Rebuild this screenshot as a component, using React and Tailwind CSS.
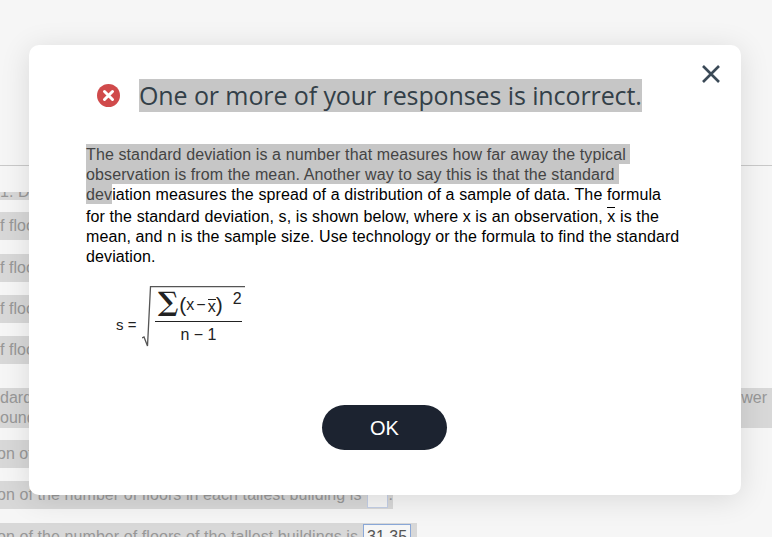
import React from "react";

const sans = "font-['Liberation_Sans',Arial,sans-serif]";

function BackRow({ children, className = "" }) {
  return (
    <div className={`whitespace-nowrap overflow-hidden bg-[#d8d8d8] text-[#979797] text-base tracking-[0.03px] ${className}`}>
      {children}
    </div>
  );
}

function ErrorIcon() {
  return (
    <svg width="23" height="23" viewBox="0 0 23 23" className="shrink-0">
      <circle cx="11.5" cy="11.5" r="11.5" fill="#d04a4b" />
      <path d="M7.5 7.5l8 8M15.5 7.5l-8 8" stroke="#fff" strokeWidth="3" strokeLinecap="round" />
    </svg>
  );
}

function Formula() {
  return (
    <div className={`flex items-center ml-[87px] mt-[19px] text-[#222] ${sans}`}>
      <span className="text-[15px] w-[26px] mt-[16px]">s =</span>
      <div className="relative w-[103px] h-[62px]">
        {/* radical sign */}
        <svg width="103" height="62" viewBox="0 0 103 62" className="absolute left-0 top-0">
          <path d="M0 52l2-1 3.5 9L8.5 0.7H103" fill="none" stroke="#555" strokeWidth="1.3" />
        </svg>
        <div className="absolute left-[13px] top-[3px] w-[87px] h-[33px] border-b border-[#222] flex items-center text-base leading-none pl-[3px]">
          <span className="text-[27px] font-bold font-['DejaVu_Serif',serif] mb-[8px]">∑</span>
          <span className="text-[21px] font-light ml-[1px] mb-[1px]">(</span>
          <span>x</span>
          <span className="mx-[2px]">−</span>
          <span className="border-t border-[#222] mt-[1px] leading-[13px]">x</span>
          <span className="text-[21px] font-light mb-[1px]">)</span>
          <span className="ml-[10px] mb-[12px]">2</span>
        </div>
        <div className="absolute left-[13px] top-[39px] w-[87px] text-center text-base leading-[20px]">n − 1</div>
      </div>
    </div>
  );
}

export default function App() {
  return (
    <div className={`relative w-[772px] h-[537px] overflow-hidden bg-[#f6f6f6] ${sans}`}>
      <div className="h-[166px] border-b border-[#c9c9c9]" />

      <div className="flex flex-col">
        <BackRow className="h-[8px] leading-[0px] mt-[26px] w-[360px]">1. Do</BackRow>
        <BackRow className="h-[28px] leading-[28px] mt-[12px] w-[360px]">f floors</BackRow>
        <BackRow className="h-[28px] leading-[28px] mt-[14px] w-[360px]">f floors</BackRow>
        <BackRow className="h-[28px] leading-[28px] mt-[13px] w-[360px]">f floors</BackRow>
        <BackRow className="h-[28px] leading-[28px] mt-[13px] w-[360px]">f floors</BackRow>
        <BackRow className="h-[40px] leading-[20px] mt-[24px]">
          <div className="flex justify-between pr-[5px]">
            <span>dard</span>
            <span>wer</span>
          </div>
          <div>ound</div>
        </BackRow>
        <BackRow className="h-[28px] leading-[28px] mt-[12px] w-[360px]">
          <span className="block -ml-[3px]">on of</span>
        </BackRow>
        <BackRow className="h-[28px] leading-[28px] mt-[13px] w-[393px] flex items-center">
          <span className="-ml-[3px] tracking-[0.08px]">on of the number of floors in each tallest building is</span>
          <span className="w-[21px] h-[24px] ml-[5px] mr-[1px] self-end mb-[1px] border border-[#c4cfe6] bg-[#f6f6f6]" />
          <span>.</span>
        </BackRow>
        <BackRow className="h-[28px] leading-[28px] mt-[14px] w-[417px] flex items-start">
          <span className="-ml-[3px] tracking-[0.08px]">on of the number of floors of the tallest buildings is</span>
          <span className="ml-[5px] mt-[1px] px-[3px] h-[24px] leading-[24px] border border-[#8aa8d8] bg-[#f6f6f6] text-[#555]">31.35</span>
        </BackRow>
      </div>

      <div className="absolute left-[29px] top-[45px] w-[712px] h-[450px] bg-white rounded-[10px] shadow-[0_4px_30px_rgba(0,0,0,0.12)]">
        <button className="absolute right-[21px] top-[20px] text-[#3b4a57]">
          <svg width="18" height="18" viewBox="0 0 18 18" className="block">
            <path d="M1 1l16 16M17 1L1 17" stroke="currentColor" strokeWidth="2.6" fill="none" />
          </svg>
        </button>

        <div className="flex items-center ml-[68px] pt-[34px]">
          <ErrorIcon />
          <h1 className="ml-[19px] bg-[#c6c6c6] text-[#333f48] text-[25px] leading-[33px] tracking-[-0.1px] font-normal font-['Open_Sans',sans-serif] whitespace-nowrap">
            One or more of your responses is incorrect.
          </h1>
        </div>

        <div className="mt-[32px] ml-[57px] text-base leading-[20px] tracking-[0.11px] text-black whitespace-nowrap">
          <div className="h-[20px]"><span className="inline-block h-[20px] pt-[1px] bg-[#c6c6c6] text-[#444] whitespace-pre">The standard deviation is a number that measures how far away the typical </span></div>
          <div className="h-[20px]"><span className="inline-block h-[20px] pt-[1px] bg-[#c6c6c6] text-[#444] whitespace-pre">observation is from the mean. Another way to say this is that the standard </span></div>
          <div className="h-[20px]"><span className="inline-block h-[20px] pt-[1px] bg-[#c6c6c6] text-[#444]">dev</span>iation measures the spread of a distribution of a sample of data. The formula</div>
          <div className="mt-[3px]">
            for the standard deviation, s, is shown below, where x is an observation,{" "}
            <span className="relative">
              <span className="absolute left-0 right-0 top-[-1px] h-px bg-black" />x
            </span>{" "}
            is the
          </div>
          <div>mean, and n is the sample size. Use technology or the formula to find the standard</div>
          <div>deviation.</div>
        </div>

        <Formula />

        <div className="flex justify-center mt-[57px] pr-[1px]">
          <button className="w-[125px] h-[45px] rounded-full bg-[#1c2330] text-white text-xl">OK</button>
        </div>
      </div>
    </div>
  );
}
